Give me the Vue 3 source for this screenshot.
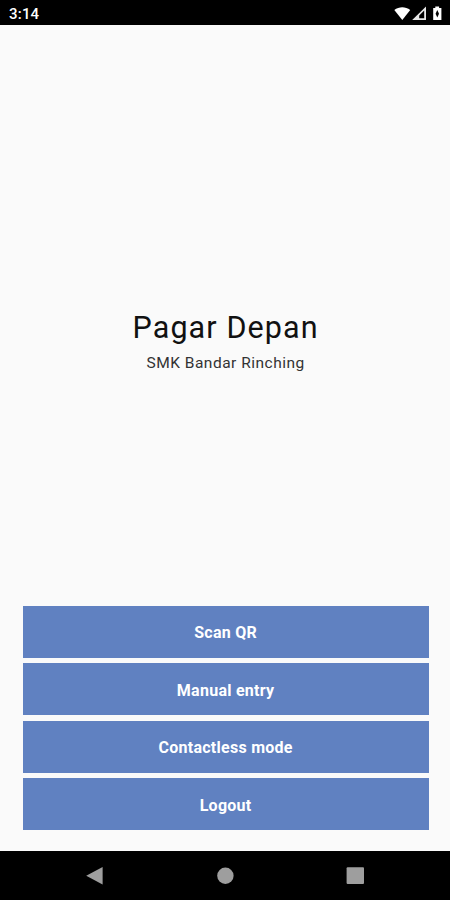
<template>
  <div class="screen">
    <header class="status-bar">
      <span class="clock">3:14</span>
      <svg class="status-icons" width="50" height="16" viewBox="0 0 50 16">
        <path d="M0.3 4C5 0.2 11.5 0.2 16.2 4L8.3 14Z" fill="#fff" />
        <path d="M18.2 14L32 0.4V14Z" fill="#e8e8e8" />
        <path d="M25.2 9.4L30.2 4.6V12.3H25.2Z" fill="#000" />
        <path d="M39.2 2H41.3V0.4H45.1V2H47.4V14H39.2Z" fill="#fff" />
        <path d="M43.3 4L45 7.7L43.3 11.4L41.6 7.7Z" fill="#000" />
      </svg>
    </header>

    <main class="content">
      <div class="heading">
        <h1 class="title">Pagar Depan</h1>
        <p class="subtitle">SMK Bandar Rinching</p>
      </div>
      <div class="actions">
        <button v-for="action in actions" :key="action" class="action-btn">{{ action }}</button>
      </div>
    </main>

    <nav class="nav-bar">
      <svg width="20" height="20" viewBox="0 0 20 20">
        <path d="M1.2 9.8L17.6 1V18.6Z" />
      </svg>
      <svg width="20" height="20" viewBox="0 0 20 20">
        <circle cx="10.4" cy="9.7" r="8.2" />
      </svg>
      <svg width="20" height="20" viewBox="0 0 20 20">
        <rect x="1.6" y="1.3" width="17.4" height="16.8" rx="1" />
      </svg>
    </nav>
  </div>
</template>

<script setup>
const actions = ['Scan QR', 'Manual entry', 'Contactless mode', 'Logout']
</script>

<style>
body {
  margin: 0;
}
</style>

<style scoped>
.screen {
  display: flex;
  flex-direction: column;
  height: 900px;
  background: #fafafa;
  font-family: Roboto, sans-serif;
}

.status-bar {
  display: flex;
  align-items: center;
  justify-content: space-between;
  box-sizing: border-box;
  height: 25px;
  padding: 2px 6px 0 9px;
  background: #000;
}

.clock {
  color: #fff;
  font-size: 15px;
  font-weight: 500;
  line-height: 20px;
  letter-spacing: 0.2px;
}

.status-icons {
  height: 16px;
}

.content {
  flex: 1;
  display: flex;
  flex-direction: column;
  padding: 0 21.5px 21px 22.7px;
}

.heading {
  flex: 1;
  display: flex;
  flex-direction: column;
  align-items: center;
  justify-content: center;
  padding-top: 51px;
  color: #111;
}

.title {
  margin: 0;
  font-size: 30.5px;
  font-weight: 400;
  line-height: 38px;
  letter-spacing: 1.1px;
}

.subtitle {
  margin: 6px 0 0;
  font-size: 15.5px;
  line-height: 20px;
  letter-spacing: 0.5px;
  color: #333;
}

.actions {
  display: flex;
  flex-direction: column;
  gap: 5.4px;
}

.action-btn {
  height: 52px;
  padding: 2px 0 0;
  border: none;
  background: #6081c1;
  color: #fff;
  font-family: inherit;
  font-size: 16px;
  font-weight: 700;
  letter-spacing: 0.27px;
}

.nav-bar {
  display: flex;
  align-items: center;
  justify-content: space-between;
  box-sizing: border-box;
  height: 49px;
  padding: 0 85px;
  background: #000;
}

.nav-bar svg {
  fill: #9e9e9e;
}
</style>
